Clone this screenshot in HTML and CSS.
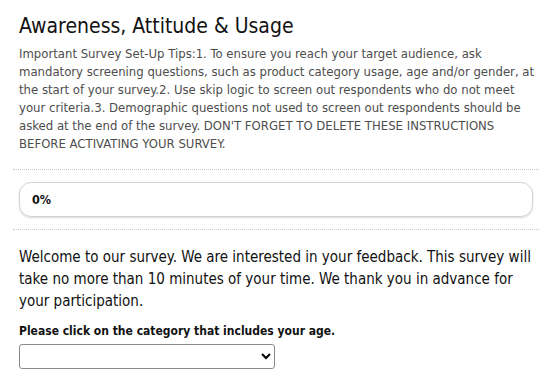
FILE: index.html
```html
<!DOCTYPE html>
<html lang="en">
<head>
	<meta charset="UTF-8">
	<meta name="viewport" content="width=device-width, initial-scale=1.0">
	<title>Awareness, Attitude &amp; Usage</title>
	<link rel="stylesheet" href="styles.css">
</head>
<body>
	<div id="survey">
		<header class="survey-head">
			<h1 class="survey-title">Awareness, Attitude &amp; Usage</h1>
			<p class="survey-desc">Important Survey Set-Up Tips:1. To ensure you reach your target audience, ask mandatory screening questions, such as product category usage, age and/or gender, at the start of your survey.2. Use skip logic to screen out respondents who do not meet your criteria.3. Demographic questions not used to screen out respondents should be asked at the end of the survey. DON'T FORGET TO DELETE THESE INSTRUCTIONS BEFORE ACTIVATING YOUR SURVEY.</p>
		</header>

		<div class="progress-wrap">
			<div class="progress">
				<span class="progress-text">0%</span>
			</div>
		</div>

		<div class="page">
			<p class="intro">Welcome to our survey. We are interested in your feedback. This survey will take no more than 10 minutes of your time. We thank you in advance for your participation.</p>

			<div class="question">
				<label class="question-title" for="age">Please click on the category that includes your age.</label>
				<select id="age" class="dropdown">
					<option></option>
				</select>
			</div>
		</div>
	</div>
</body>
</html>
```

FILE: styles.css
```css
:root{
	--text-dark: #111;
	--text-muted: #4d4d4d;
	--line: #c8c8c8;
}

body{
	margin: 0;
	background: #fff;
	font-family: "DejaVu Sans Condensed", "DejaVu Sans", sans-serif;
	color: var(--text-dark);
}

#survey{
	width: 526px;
	padding: 13px 0 0 13px;
}

.survey-head{
	padding-left: 6px;
}

.survey-title{
	margin: 0;
	font-size: 21px;
	font-weight: normal;
	line-height: 26px;
}

.survey-desc{
	margin: 6px 0 0;
	font-size: 13px;
	line-height: 18px;
	color: var(--text-muted);
}

.progress-wrap{
	margin-top: 16px;
	padding: 12px 6px 12px 6px;
	border-top: 1px dotted var(--line);
	border-bottom: 1px dotted var(--line);
}

.progress{
	height: 33px;
	border: 1px solid #d2d2d2;
	border-radius: 12px;
	box-shadow: 0 1px 2px rgba(0,0,0,0.15);
	display: flex;
	align-items: center;
	padding-left: 12px;
}

.progress-text{
	font-size: 12.5px;
	font-weight: bold;
}

.page{
	padding: 16px 0 0 6px;
}

.intro{
	margin: 0;
	font-size: 15px;
	line-height: 22px;
}

.question{
	margin-top: 11px;
}

.question-title{
	display: block;
	font-size: 12px;
	font-weight: bold;
	line-height: 16px;
}

.dropdown{
	margin-top: 5px;
	width: 256px;
	height: 25px;
	border: 1px solid #8a8a8a;
	border-radius: 3px;
	background: #fff;
}
```
